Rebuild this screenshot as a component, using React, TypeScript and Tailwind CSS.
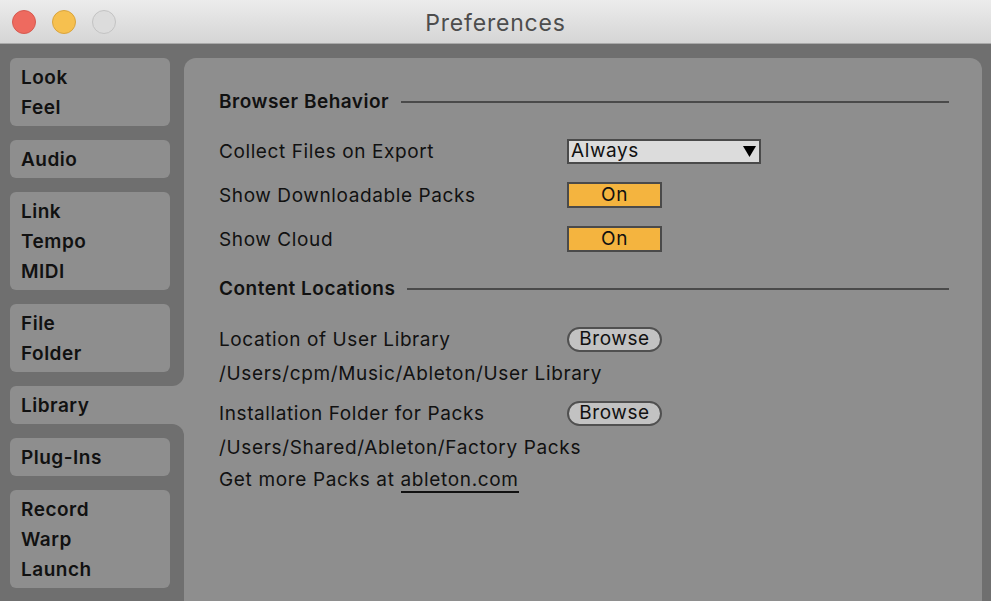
import React from "react";

const font = { fontFamily: "Inter, 'Noto Sans', sans-serif" };

function SideBox({ items }: { items: string[] }) {
  return (
    <div className="rounded-[6px] bg-[#8e8e8e] pb-[3px] pl-[11px] pt-[5px]">
      {items.map((t) => (
        <div key={t} className="h-[30px] text-[19px] font-semibold leading-[30px] tracking-[0.5px] text-[#111]">
          {t}
        </div>
      ))}
    </div>
  );
}

function Heading({ title }: { title: string }) {
  return (
    <div className="flex h-[30px] items-center">
      <span className="text-[19px] font-semibold tracking-[0.5px] text-[#111]">{title}</span>
      <div className="ml-[12px] h-[2px] flex-1 bg-[#4a4a4a]" />
    </div>
  );
}

function Row({ label, children, h = "h-[44px]" }: { label: string; children?: React.ReactNode; h?: string }) {
  return (
    <div className={`flex items-center ${h}`}>
      <div className="w-[348px] pt-[2px] text-[19px] tracking-[0.6px] text-[#111]">{label}</div>
      {children}
    </div>
  );
}

function Toggle() {
  return (
    <div className="flex h-[26px] w-[95px] items-center justify-center border-2 border-[#4a4a4a] bg-[#f4b43f] text-[19px] tracking-[0.6px] text-[#111]">
      On
    </div>
  );
}

function Browse() {
  return (
    <div className="flex h-[25px] w-[95px] items-center justify-center rounded-full border-2 border-[#505050] bg-[#c2c2c2] text-[19px] tracking-[0.6px] text-[#111]">
      Browse
    </div>
  );
}

export default function App() {
  return (
    <div className="flex h-[601px] w-[991px] flex-col overflow-hidden bg-[#6f6f6f]" style={font}>
      {/* Title bar */}
      <div className="relative flex h-[44px] shrink-0 items-center border-b border-[#a9a9a9] bg-gradient-to-b from-[#ececec] to-[#d5d5d5]">
        <div className="flex items-center gap-[16px] pl-[12px]">
          <div className="h-[24px] w-[24px] rounded-full border border-[#d65a50] bg-[#ee6a5f]" />
          <div className="h-[24px] w-[24px] rounded-full border border-[#d9a43e] bg-[#f6c04f]" />
          <div className="h-[24px] w-[24px] rounded-full border border-[#c3c3c3] bg-[#dcdcdc]" />
        </div>
        <div className="absolute inset-0 flex items-center justify-center pt-[3px] text-[23px] tracking-[0.8px] text-[#4d4d4d]">
          Preferences
        </div>
      </div>

      {/* Body */}
      <div className="flex flex-1">
        {/* Sidebar */}
        <div className="flex w-[184px] shrink-0 flex-col bg-[#8e8e8e]">
          <div className="flex flex-col gap-[14px] rounded-br-[12px] bg-[#6f6f6f] pb-[14px] pl-[10px] pr-[14px] pt-[14px]">
            <SideBox items={["Look", "Feel"]} />
            <SideBox items={["Audio"]} />
            <SideBox items={["Link", "Tempo", "MIDI"]} />
            <SideBox items={["File", "Folder"]} />
          </div>
          <div className="bg-[#6f6f6f] pl-[10px]">
            <div className="h-[38px] rounded-l-[6px] bg-[#8e8e8e] pl-[11px] pt-[1px] text-[19px] font-semibold leading-[38px] tracking-[0.5px] text-[#111]">
              Library
            </div>
          </div>
          <div className="flex flex-1 flex-col gap-[14px] rounded-tr-[12px] bg-[#6f6f6f] pl-[10px] pr-[14px] pt-[14px]">
            <SideBox items={["Plug-Ins"]} />
            <SideBox items={["Record", "Warp", "Launch"]} />
          </div>
        </div>

        {/* Main panel */}
        <div className="mr-[9px] mt-[14px] flex-1 rounded-t-[12px] bg-[#8e8e8e] pl-[35px] pr-[33px] pt-[29px]">
          <Heading title="Browser Behavior" />
          <div className="mt-[12px]">
            <Row label="Collect Files on Export">
              <div className="flex h-[25px] w-[194px] items-center justify-between border-2 border-[#4a4a4a] bg-[#dcdcdc] pl-[2px] pr-[3px] text-[19px] tracking-[0.6px] text-[#111]">
                <span>Always</span>
                <svg width="13" height="11" viewBox="0 0 13 11">
                  <polygon points="0,0 13,0 6.5,11" fill="#000" />
                </svg>
              </div>
            </Row>
            <Row label="Show Downloadable Packs">
              <Toggle />
            </Row>
            <Row label="Show Cloud">
              <Toggle />
            </Row>
          </div>
          <div className="mt-[13px]">
            <Heading title="Content Locations" />
          </div>
          <div className="mt-[18px] text-[19px] tracking-[0.65px] text-[#111]">
            <Row label="Location of User Library" h="h-[34px]">
              <Browse />
            </Row>
            <div className="mt-[1px] flex h-[32px] items-center pt-[2px]">
              /Users/cpm/Music/Ableton/User Library
            </div>
            <div className="mt-[7px]">
              <Row label="Installation Folder for Packs" h="h-[34px]">
                <Browse />
              </Row>
            </div>
            <div className="mt-[1px] flex h-[32px] items-center pt-[2px]">
              /Users/Shared/Ableton/Factory Packs
            </div>
            <div className="flex h-[32px] items-center pt-[3px]">
              <span>Get more Packs at&nbsp;</span>
              <span className="border-b-2 border-[#111] leading-[22px]">ableton.com</span>
            </div>
          </div>
        </div>
      </div>
    </div>
  );
}
